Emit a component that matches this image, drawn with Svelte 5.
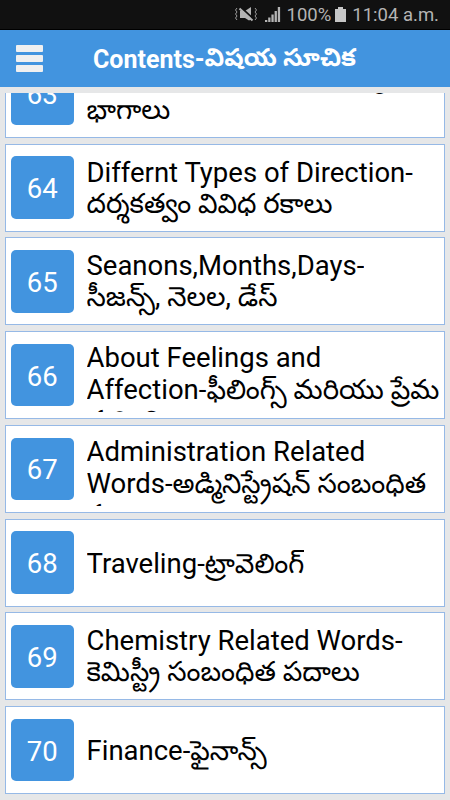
<script>
  // layout: 'two' and 'one' fit the row, 'three' is cut off under its second line
  const chapters = [
    { id: 63, layout: 'two', lines: [['Differnt Parts of Building-', ''], ['', 'భాగాలు']] },
    { id: 64, layout: 'two', lines: [['Differnt Types of Direction-', ''], ['', 'దర్శకత్వం వివిధ రకాలు']] },
    { id: 65, layout: 'two', lines: [['Seanons,Months,Days-', ''], ['', 'సీజన్స్, నెలల, డేస్']] },
    { id: 66, layout: 'three', lines: [['About Feelings and', ''], ['Affection-', 'ఫీలింగ్స్ మరియు ప్రేమ'], ['', 'గురించి']] },
    { id: 67, layout: 'three', lines: [['Administration Related', ''], ['Words-', 'అడ్మినిస్ట్రేషన్ సంబంధిత'], ['', 'పదాలు']] },
    { id: 68, layout: 'one', lines: [['Traveling-', 'ట్రావెలింగ్']] },
    { id: 69, layout: 'two', lines: [['Chemistry Related Words-', ''], ['', 'కెమిస్ట్రీ సంబంధిత పదాలు']] },
    { id: 70, layout: 'one', lines: [['Finance-', 'ఫైనాన్స్']] },
  ];
</script>

<div class="screen">
  <div class="status">
    <svg class="mute" width="24" height="18" viewBox="0 0 24 18">
      <path d="M6 5h5l6-4v12.500l-2 1-4-2.500H6z" fill="#b4b4b4" />
      <path d="M7 1.500l13 12" stroke="#111" stroke-width="2" />
      <path d="M5.500 2.500l13 12" stroke="#b4b4b4" stroke-width="2" />
      <path d="M3 2L1.500 4 3 6 1.500 8 3 10l-1.500 2L3 14M21 2l1.500 2L21 6l1.500 2-1.500 2 1.500 2-1.500 2" fill="none" stroke="#999" stroke-width="1" />
    </svg>
    <svg class="signal" width="16" height="16" viewBox="0 0 16 16" fill="#b4b4b4">
      <path d="M0 13h2.300v2H0zM3.200 10.500h2.300V15H3.200zM6.400 7.500h2.300V15H6.400zM9.600 4h2.300v11H9.600zM12.800 0h2.300v15h-2.300z" />
    </svg>
    <span class="pct">100%</span>
    <svg class="battery" width="11" height="16" viewBox="0 0 11 16" fill="#c6c6c6">
      <path d="M3 0h5v2h3v13H0V2h3z" />
    </svg>
    <span class="time">11:04 a.m.</span>
  </div>

  <header>
    <button class="menu" aria-label="Menu"><i></i><i></i><i></i></button>
    <h1>Contents-<span class="te">విషయ సూచిక</span></h1>
  </header>

  <main>
    <ul>
      {#each chapters as c (c.id)}
        <li>
          <span class="num">{c.id}</span>
          <div class="title {c.layout}">
            {#each c.lines as [en, te]}
              <div class="line">{en}{#if te}<span class="te">{te}</span>{/if}</div>
            {/each}
          </div>
        </li>
      {/each}
    </ul>
  </main>
</div>

<style>
  :global(body) { margin: 0; }
  .screen { width: 450px; height: 800px; display: flex; flex-direction: column; overflow: hidden; background: #e6e7e8; font-family: Roboto, "Noto Sans Telugu", "Noto Sans", sans-serif; }
  .status { height: 30px; flex: none; box-sizing: border-box; display: flex; align-items: center; justify-content: flex-end; padding: 1px 11px 0 0; background: #111; border-bottom: 1px solid #000; color: #b4b4b4; font-size: 18.500px; white-space: nowrap; }
  .mute { margin-right: 7px; }
  .signal { margin-right: 6px; }
  .battery { margin: 0 6px 0 4px; }
  header { height: 57px; flex: none; display: flex; align-items: center; background: #4294df; color: #fff; }
  .menu { width: 27px; margin: 0 0 0 16px; padding: 0; border: 0; background: none; display: flex; flex-direction: column; gap: 3px; }
  .menu i { height: 7px; background: #f0f0f0; border-radius: 1px; }
  h1 { margin: 3px 0 0 50px; font-size: 25px; font-weight: 700; line-height: 30px; white-space: nowrap; }
  h1 .te { vertical-align: 2px; line-height: 1; }
  main { flex: 1; margin-top: 6px; overflow: hidden; }
  ul { list-style: none; margin: -43.250px 5px 0; padding: 0; display: flex; flex-direction: column; gap: 5.750px; }
  li { height: 88px; flex: none; box-sizing: border-box; display: flex; align-items: center; padding-left: 5px; background: #fff; border: 1px solid #96b9e6; overflow: hidden; }
  .num { width: 62.500px; height: 62.500px; flex: none; box-sizing: border-box; padding-top: 2px; display: flex; align-items: center; justify-content: center; border-radius: 5px; background: #4294df; color: #fff; font-size: 27.500px; }
  .title { height: 74px; box-sizing: border-box; margin-left: 13px; display: flex; flex-direction: column; overflow: hidden; color: #000; font-size: 27.500px; white-space: nowrap; }
  .line { height: 32px; flex: none; line-height: 32px; }
  .two { padding-top: 6px; }
  .two .line { height: 31px; }
  .three { padding-top: 4px; }
  .three .line:last-child { margin-top: -1px; }
  .one { justify-content: center; padding-top: 2px; }
</style>
